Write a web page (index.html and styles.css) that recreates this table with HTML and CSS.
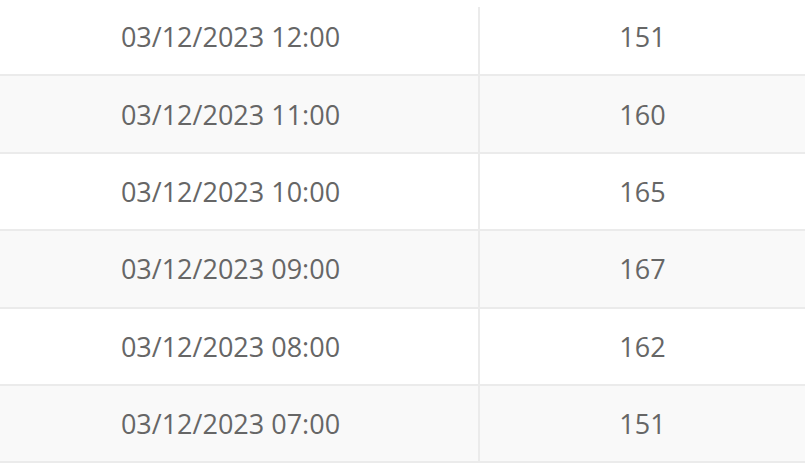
FILE: index.html
```html
<!DOCTYPE html>
<html>
<head>
<meta charset="utf-8">
<link rel="stylesheet" href="styles.css">
</head>
<body>
<div class="table">
  <div class="row">
    <div class="cell date">03/12/2023 12:00</div>
    <div class="cell value first">151</div>
  </div>
  <div class="row alt">
    <div class="cell date">03/12/2023 11:00</div>
    <div class="cell value">160</div>
  </div>
  <div class="row">
    <div class="cell date">03/12/2023 10:00</div>
    <div class="cell value">165</div>
  </div>
  <div class="row alt">
    <div class="cell date">03/12/2023 09:00</div>
    <div class="cell value">167</div>
  </div>
  <div class="row">
    <div class="cell date">03/12/2023 08:00</div>
    <div class="cell value">162</div>
  </div>
  <div class="row alt">
    <div class="cell date">03/12/2023 07:00</div>
    <div class="cell value">151</div>
  </div>
</div>
</body>
</html>
```
FILE: styles.css
```css
html, body {
  margin: 0;
  padding: 0;
  background: #fff;
  overflow: hidden;
}
.table {
  margin-top: -1px;
  margin-left: -17px;
  width: 822px;
  font-family: "Open Sans", "DejaVu Sans", sans-serif;
  font-size: 27px;
  color: #666;
}
.row {
  display: grid;
  grid-template-columns: 495px 1fr;
  height: 75.4px;
  border-bottom: 2px solid #ebebeb;
  background: #fff;
}
.row.alt {
  background: #f9f9f9;
}
.cell {
  display: flex;
  align-items: center;
  justify-content: center;
}
.value {
  border-left: 2px solid #ebebeb;
}
.value.first {
  border-left: none;
  padding-left: 2px;
  background: linear-gradient(#ebebeb, #ebebeb) left 8px / 2px 100% no-repeat;
}
```
